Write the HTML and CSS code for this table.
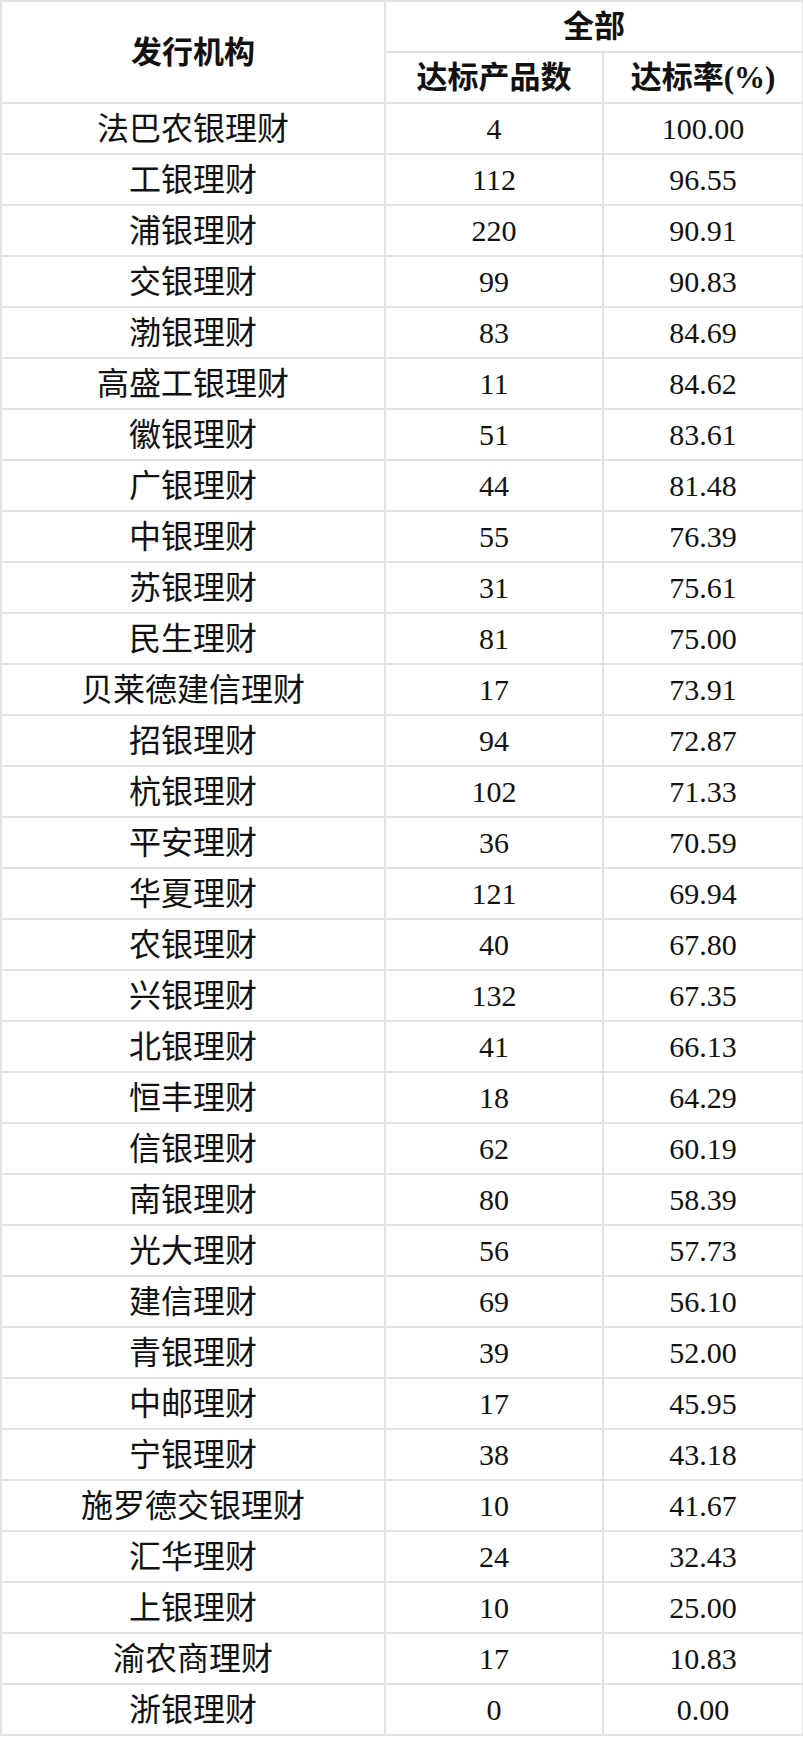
FILE: index.html
```html
<!DOCTYPE html>
<html lang="zh-CN">
<head>
<meta charset="utf-8">
<title>达标率</title>
<link rel="stylesheet" href="styles.css">
</head>
<body>
<table class="grid">
  <colgroup>
    <col class="c-name">
    <col class="c-count">
    <col class="c-rate">
  </colgroup>
  <thead>
    <tr>
      <th rowspan="2" class="h-name">发行机构</th>
      <th colspan="2">全部</th>
    </tr>
    <tr>
      <th>达标产品数</th>
      <th>达标率(%)</th>
    </tr>
  </thead>
  <tbody>
    <tr><td class="name">法巴农银理财</td><td>4</td><td>100.00</td></tr>
    <tr><td class="name">工银理财</td><td>112</td><td>96.55</td></tr>
    <tr><td class="name">浦银理财</td><td>220</td><td>90.91</td></tr>
    <tr><td class="name">交银理财</td><td>99</td><td>90.83</td></tr>
    <tr><td class="name">渤银理财</td><td>83</td><td>84.69</td></tr>
    <tr><td class="name">高盛工银理财</td><td>11</td><td>84.62</td></tr>
    <tr><td class="name">徽银理财</td><td>51</td><td>83.61</td></tr>
    <tr><td class="name">广银理财</td><td>44</td><td>81.48</td></tr>
    <tr><td class="name">中银理财</td><td>55</td><td>76.39</td></tr>
    <tr><td class="name">苏银理财</td><td>31</td><td>75.61</td></tr>
    <tr><td class="name">民生理财</td><td>81</td><td>75.00</td></tr>
    <tr><td class="name">贝莱德建信理财</td><td>17</td><td>73.91</td></tr>
    <tr><td class="name">招银理财</td><td>94</td><td>72.87</td></tr>
    <tr><td class="name">杭银理财</td><td>102</td><td>71.33</td></tr>
    <tr><td class="name">平安理财</td><td>36</td><td>70.59</td></tr>
    <tr><td class="name">华夏理财</td><td>121</td><td>69.94</td></tr>
    <tr><td class="name">农银理财</td><td>40</td><td>67.80</td></tr>
    <tr><td class="name">兴银理财</td><td>132</td><td>67.35</td></tr>
    <tr><td class="name">北银理财</td><td>41</td><td>66.13</td></tr>
    <tr><td class="name">恒丰理财</td><td>18</td><td>64.29</td></tr>
    <tr><td class="name">信银理财</td><td>62</td><td>60.19</td></tr>
    <tr><td class="name">南银理财</td><td>80</td><td>58.39</td></tr>
    <tr><td class="name">光大理财</td><td>56</td><td>57.73</td></tr>
    <tr><td class="name">建信理财</td><td>69</td><td>56.10</td></tr>
    <tr><td class="name">青银理财</td><td>39</td><td>52.00</td></tr>
    <tr><td class="name">中邮理财</td><td>17</td><td>45.95</td></tr>
    <tr><td class="name">宁银理财</td><td>38</td><td>43.18</td></tr>
    <tr><td class="name">施罗德交银理财</td><td>10</td><td>41.67</td></tr>
    <tr><td class="name">汇华理财</td><td>24</td><td>32.43</td></tr>
    <tr><td class="name">上银理财</td><td>10</td><td>25.00</td></tr>
    <tr><td class="name">渝农商理财</td><td>17</td><td>10.83</td></tr>
    <tr><td class="name">浙银理财</td><td>0</td><td>0.00</td></tr>
  </tbody>
</table>
</body>
</html>
```
FILE: styles.css
```css
html, body {
  margin: 0;
  padding: 0;
  background: #ffffff;
}

.grid {
  border-collapse: collapse;
  table-layout: fixed;
  width: 802px;
  margin: 0;
  color: #111111;
  font-family: "Liberation Serif", "Noto Sans CJK SC", serif;
}

.c-name { width: 384px; }
.c-count { width: 218px; }
.c-rate { width: 200px; }

.grid th,
.grid td {
  border: 2px solid #e3e3e3;
  padding: 0;
  height: 49px;
  text-align: center;
  vertical-align: middle;
  line-height: 1;
  white-space: nowrap;
}

.grid th {
  font-size: 31px;
  font-weight: bold;
}

.grid td {
  font-size: 30px;
  font-weight: normal;
}

.grid td.name {
  font-size: 32px;
}
```
